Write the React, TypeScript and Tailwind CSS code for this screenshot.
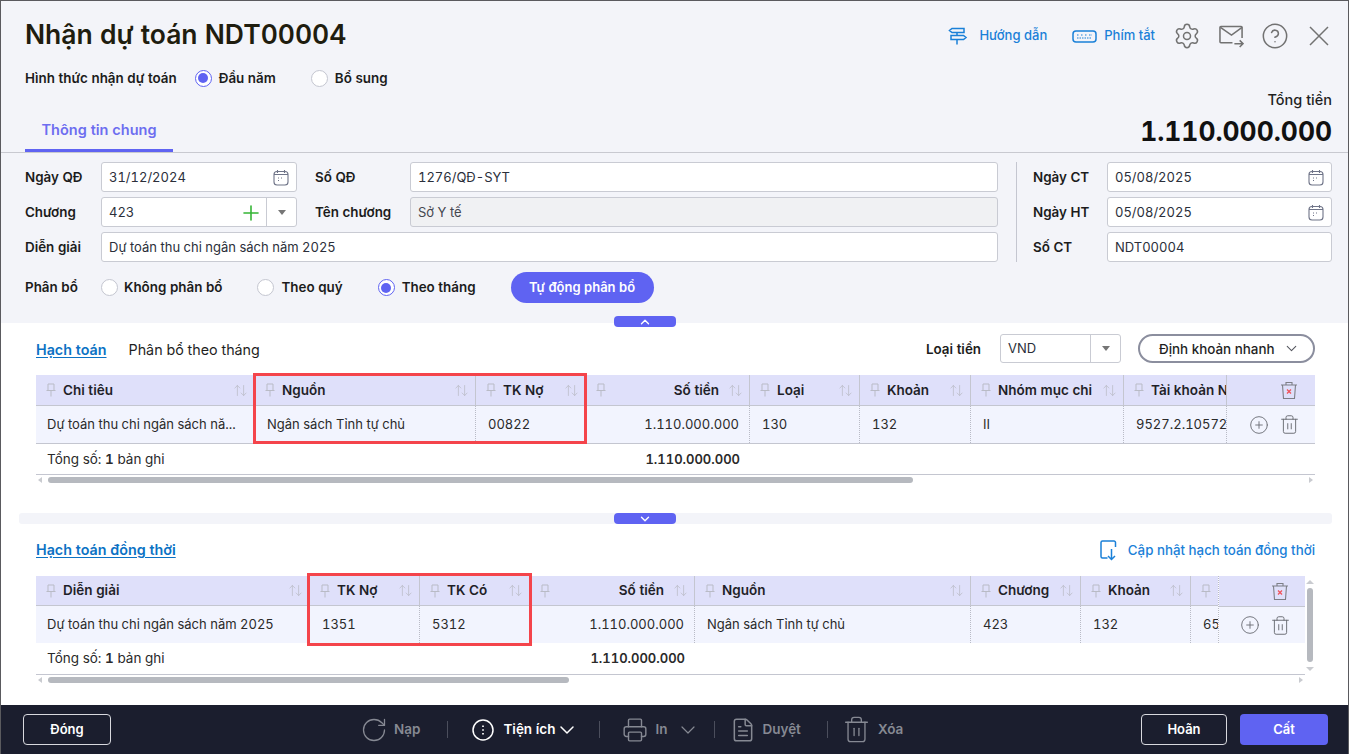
import React from 'react'
import { ArrowUpDown, ChevronDown, ChevronUp, CircleHelp, CirclePlus, FileText, Plus, Printer, RotateCw, Settings, Trash2 } from 'lucide-react'

const Radio = ({ checked = false }: { checked?: boolean }) => (
    <span className={`flex h-[17px] w-[17px] shrink-0 items-center justify-center rounded-full bg-white ${checked ? 'border-[1.5px] border-[#5f63f2]' : 'border border-[#c4c6d0]'}`}>
        {checked && <span className="h-[10px] w-[10px] rounded-full bg-[#5f63f2]" />}
    </span>
)

const CalendarIcon = () => (
    <svg width="16" height="17" viewBox="0 0 16 17" fill="none" stroke="#6f7488" strokeWidth="1.1" className="absolute right-[7px] top-[6px]">
        <rect x="1" y="2.5" width="14" height="13.5" rx="3" />
        <path d="M1 5.5h14M4.5 1v3M11.5 1v3" />
        <path d="M5 9h1M8 9h1M5 11.5h1" strokeWidth="1" />
    </svg>
)

const Caret = () => (
    <svg width="10" height="7" viewBox="0 0 10 7"><path d="M1 1h8L5 6z" fill="#767676" /></svg>
)

const Pin = () => (
    <svg width="10" height="14" viewBox="0 0 10 14" fill="none" stroke="#b9bbc6" strokeWidth="1" className="shrink-0">
        <path d="M2 1h6v6.5H2zM.5 7.500h9M5 7.500V13.500" />
    </svg>
)

const Sort = () => <ArrowUpDown size={15} strokeWidth={1.2} className="shrink-0 text-[#b9bbc6]" />

const TrashX = () => (
    <svg width="18" height="19" viewBox="0 0 18 19" fill="none" stroke="#7d7f86" strokeWidth="1.1">
        <path d="M1 4h16M6 4V1.500h6V4M2.500 4l1 13.500h11l1-13.500" />
        <path d="M7 8.500l4 4M11 8.500l-4 4" stroke="#f0525a" strokeWidth="1.300" />
    </svg>
)

const Field = ({ value, muted = false, calendar = false }: { value: string; muted?: boolean; calendar?: boolean }) => (
    <div className={`relative flex h-[30px] items-center rounded-[3px] border border-[#c9cbd3] px-[7px] pt-[1px] text-[13px] ${muted ? 'bg-[#f0f1f3] text-[#44474f]' : 'bg-white text-[#2b2f3a]'}`}>
        {value}
        {calendar && <CalendarIcon />}
    </div>
)

const Label = ({ children, className = '' }: { children: React.ReactNode; className?: string }) => (
    <div className={`flex items-center text-[13.4px] font-semibold text-[#1c1c1c] ${className}`}>{children}</div>
)

const HeadCell = ({ title, right = false, sort = true }: { title?: string; right?: boolean; sort?: boolean }) => (
    <div className="flex h-full min-w-0 items-center overflow-hidden border-r border-[#c4c6d0] pl-[10px] pr-[6px]">
        <Pin />
        {title && (
            <span className={`ml-[7px] whitespace-nowrap text-[13.5px] font-semibold text-[#1f1f28] ${right ? 'flex-1 pr-[9px] text-right' : ''}`}>{title}</span>
        )}
        {title && sort && <span className={right ? '' : 'ml-auto'}><Sort /></span>}
    </div>
)

const BodyCell = ({ value, right = false }: { value: string; right?: boolean }) => (
    <div className={`flex h-full min-w-0 items-center overflow-hidden whitespace-nowrap border-r border-dotted border-[#b9bbc6] pl-[12px] pr-[10px] text-[13px] first:pl-[11px] ${right ? 'justify-end' : ''}`}>
        {value}
    </div>
)

const ActionHead = () => (
    <div className="flex h-[31px] w-full items-center justify-center border-b border-[#c4c6d0] bg-[#dfe0fa] pl-[35px]">
        <TrashX />
    </div>
)

const ActionBody = ({ height }: { height: string }) => (
    <div className={`flex w-full items-center justify-center gap-[10px] bg-[#f2f4fe] pl-[7px] text-[#6a6c74] ${height}`}>
        <CirclePlus size={20} strokeWidth={1.1} />
        <Trash2 size={21} strokeWidth={1.1} />
    </div>
)

const HScroll = ({ thumb }: { thumb: string }) => (
    <div className="flex h-[10px] w-full items-center border-t border-[#c4c6d0]">
        <span className="ml-[2px] h-0 w-0 border-y-[3px] border-r-[4px] border-y-transparent border-r-[#c9cbd0]" />
        <span className={`ml-[6px] h-[6px] rounded-full bg-[#b6b9bf] ${thumb}`} />
        <span className="ml-auto mr-[2px] h-0 w-0 border-y-[3px] border-l-[4px] border-y-transparent border-l-[#c9cbd0]" />
    </div>
)

const CollapseTab = ({ up }: { up: boolean }) => (
    <button className="flex h-[11px] w-[62px] items-center justify-center rounded-[4px] bg-[#5f63f2] text-white">
        {up ? <ChevronUp size={14} strokeWidth={2.4} /> : <ChevronDown size={14} strokeWidth={2.4} />}
    </button>
)

const ToolSep = () => <span className="block h-[17px] w-px bg-[#4b4e5c]" />

export default function App() {
    return (
        <div className="h-[754px] w-[1351px] overflow-hidden bg-white font-['Inter',sans-serif] tabular-nums">
            <div className="flex h-full w-[1349px] flex-col border-x border-t border-[#5a5a5e]">

                {/* header */}
                <div className="border-b border-[#c8c9d0] bg-[#f3f4f9] pl-[24px] pr-[16px] pt-[16px]">
                    <div className="flex h-[36px] items-center justify-between">
                        <h1 className="text-[26.5px] font-semibold text-[#1f1d0f]">Nhận dự toán NDT00004</h1>
                        <div className="flex items-center pt-[2px] text-[13px] font-medium text-[#1a80d8]">
                            <svg width="20" height="20" viewBox="0 0 20 20" fill="none" stroke="#1a80d8" strokeWidth="1.500">
                                <path d="M4 2.500h12v4H4L1.500 4.500zM3 9.500h12.500L18 11.500l-2.500 2H3zM9 6.500v3M9 13.500v5" />
                            </svg>
                            <span className="ml-[11px]">Hướng dẫn</span>
                            <svg width="25" height="13" viewBox="0 0 25 13" fill="none" stroke="#1a80d8" strokeWidth="1.500" className="ml-[25px]">
                                <rect x="1" y="1" width="23" height="11" rx="3" />
                                <path d="M5 5h2M9 5h2M13 5h2M17 5h3M5 8h15" strokeWidth="1.200" strokeDasharray="1.500 1" />
                            </svg>
                            <span className="ml-[7px]">Phím tắt</span>
                            <Settings size={28} strokeWidth={1.3} className="ml-[18px] text-[#727272]" />
                            <svg width="25" height="23" viewBox="0 0 26 23" fill="none" stroke="#727272" strokeWidth="1.600" className="ml-[18px]">
                                <path d="M14 18H2a1 1 0 0 1-1-1V2a1 1 0 0 1 1-1h21a1 1 0 0 1 1 1v11" />
                                <path d="M1.500 2l11.500 8 11-8M16 19h9M21.500 15.500 25 19l-3.500 3.500" />
                            </svg>
                            <CircleHelp size={28} strokeWidth={1.3} className="ml-[17px] text-[#727272]" />
                            <svg width="20" height="20" viewBox="0 0 20 20" fill="none" stroke="#727272" strokeWidth="1.500" className="ml-[20px] mr-[3px]">
                                <path d="M1 1l18 18M19 1 1 19" />
                            </svg>
                        </div>
                    </div>

                    <div className="mt-[15px] flex h-[20px] items-center text-[13.4px] font-semibold text-[#1c1c1c]">
                        <span>Hình thức nhận dự toán</span>
                        <span className="ml-[18px]"><Radio checked /></span>
                        <span className="ml-[7px]">Đầu năm</span>
                        <span className="ml-[35px]"><Radio /></span>
                        <span className="ml-[7px]">Bổ sung</span>
                    </div>

                    <div className="mt-[3px] flex items-end justify-between">
                        <div className="flex h-[37px] w-[148px] items-center justify-center border-b-[3px] border-[#5f63f2] pb-[5px] text-[14.5px] font-semibold text-[#6d6df0]">Thông tin chung</div>
                        <div className="text-right">
                            <div className="text-[14.5px] font-medium leading-[18px] text-[#1f1f1f]">Tổng tiền</div>
                            <div className="mb-[5px] mt-[6px] text-[26.4px] font-bold leading-[32px] text-[#111]">1.110.000.000</div>
                        </div>
                    </div>
                </div>

                {/* form */}
                <div className="relative h-[170px] shrink-0 bg-[#f3f4f9] pl-[24px] pr-[16px] pt-[9px]">
                    <div className="flex">
                        <div className="grid flex-1 grid-cols-[76px_196px_113px_1fr] gap-y-[5px]">
                            <Label>Ngày QĐ</Label>
                            <Field value="31/12/2024" calendar />
                            <Label className="pl-[18px]">Số QĐ</Label>
                            <Field value="1276/QĐ-SYT" />
                            <Label className="pt-[1px]">Chương</Label>
                            <div className="flex h-[30px] rounded-[3px] border border-[#c9cbd3] bg-white text-[13px] text-[#2b2f3a]">
                                <div className="flex flex-1 items-center justify-between border-r border-[#c9cbd3] pl-[7px] pr-[3px] pt-[1px]">
                                    423
                                    <Plus size={24} strokeWidth={1.6} className="text-[#35b535]" />
                                </div>
                                <div className="flex w-[29px] items-center justify-center"><Caret /></div>
                            </div>
                            <Label className="pl-[18px] pt-[1px]">Tên chương</Label>
                            <Field value="Sở Y tế" muted />
                            <Label className="pt-[1px]">Diễn giải</Label>
                            <div className="col-span-3"><Field value="Dự toán thu chi ngân sách năm 2025" /></div>
                        </div>
                        <div className="ml-[18px] grid w-[316px] grid-cols-[90px_1fr] gap-y-[5px] border-l border-[#c4c6d0]">
                            <Label className="pl-[16px]">Ngày CT</Label>
                            <Field value="05/08/2025" calendar />
                            <Label className="pl-[16px] pt-[1px]">Ngày HT</Label>
                            <Field value="05/08/2025" calendar />
                            <Label className="pl-[16px] pt-[1px]">Số CT</Label>
                            <Field value="NDT00004" />
                        </div>
                    </div>
                    <div className="mt-[10px] flex h-[31px] items-center text-[13.4px] font-semibold text-[#1c1c1c]">
                        <span className="w-[76px]">Phân bổ</span>
                        <Radio />
                        <span className="ml-[6px]">Không phân bổ</span>
                        <span className="ml-[35px]"><Radio /></span>
                        <span className="ml-[7px]">Theo quý</span>
                        <span className="ml-[35px]"><Radio checked /></span>
                        <span className="ml-[7px]">Theo tháng</span>
                        <button className="ml-[35px] h-[31px] w-[143px] rounded-full bg-[#5f63f2] text-[13px] font-semibold text-white">Tự động phân bổ</button>
                    </div>
                    <div className="absolute left-[613px] top-[163px]"><CollapseTab up /></div>
                </div>

                {/* body */}
                <div className="min-h-0 flex-1 bg-white">
                    <div className="pl-[35px] pr-[33px] pt-[11px]">
                        <div className="flex h-[29px] items-center">
                            <span className="pt-[2px] text-[14.3px] font-semibold text-[#0b72c4] underline underline-offset-2">Hạch toán</span>
                            <span className="ml-[22px] pt-[2px] text-[14.3px] text-[#1f1f1f]">Phân bổ theo tháng</span>
                            <span className="ml-auto pt-[2px] text-[13.4px] font-semibold text-[#1c1c1c]">Loại tiền</span>
                            <div className="ml-[19px] flex h-[29px] w-[121px] rounded-[3px] border border-[#c9cbd3] text-[13px] text-[#2b2f3a]">
                                <div className="flex flex-1 items-center border-r border-[#c9cbd3] pl-[7px] pt-[1px]">VND</div>
                                <div className="flex w-[29px] items-center justify-center"><Caret /></div>
                            </div>
                            <button className="ml-[17px] flex h-[29px] w-[177px] items-center justify-between rounded-full border-2 border-[#8b8e9e] pl-[19px] pr-[13px] text-[13.4px] font-medium text-[#1f1f1f]">
                                <span className="pt-[1px]">Định khoản nhanh</span>
                                <ChevronDown size={17} strokeWidth={1.5} className="text-[#55575f]" />
                            </button>
                        </div>

                        <div className="relative mt-[12px]">
                            <div className="flex">
                                <div className="min-w-0 flex-1 overflow-hidden">
                                    <div className="grid h-[31px] grid-cols-[219px_221px_110px_164px_110px_111px_153px_103px] border-b border-[#c4c6d0] bg-[#dfe0fa]">
                                        <HeadCell title="Chi tiêu" />
                                        <HeadCell title="Nguồn" />
                                        <HeadCell title="TK Nợ" />
                                        <HeadCell title="Số tiền" right />
                                        <HeadCell title="Loại" />
                                        <HeadCell title="Khoản" />
                                        <HeadCell title="Nhóm mục chi" />
                                        <HeadCell title="Tài khoản N" sort={false} />
                                    </div>
                                    <div className="grid h-[38px] grid-cols-[219px_221px_110px_164px_110px_111px_153px_103px] border-b border-[#c4c6d0] bg-[#f2f4fe] text-[#2a2a2a]">
                                        <BodyCell value="Dự toán thu chi ngân sách nă..." />
                                        <BodyCell value="Ngân sách Tỉnh tự chủ" />
                                        <BodyCell value="00822" />
                                        <BodyCell value="1.110.000.000" right />
                                        <BodyCell value="130" />
                                        <BodyCell value="132" />
                                        <BodyCell value="II" />
                                        <BodyCell value="9527.2.10572" />
                                    </div>
                                </div>
                                <div className="w-[88px] shrink-0">
                                    <ActionHead />
                                    <div className="border-b border-[#c4c6d0]"><ActionBody height="h-[37px]" /></div>
                                </div>
                            </div>
                            <div className="grid h-[30px] grid-cols-[550px_164px] items-center pt-[1px] text-[13.5px] text-[#2a2a2a]">
                                <span className="pl-[11px]">Tổng số: <b className="font-semibold">1</b> bản ghi</span>
                                <span className="pr-[10px] text-right text-[13px] font-semibold">1.110.000.000</span>
                            </div>
                            <HScroll thumb="w-[865px]" />
                            <div className="pointer-events-none absolute left-[217px] top-[-2px] h-[71px] w-[334px] border-[3px] border-[#f4444b]" />
                        </div>
                    </div>

                    <div className="relative ml-[18px] mt-[29px] h-[11px] w-[1313px] rounded-[3px] bg-[#f3f4f9]">
                        <div className="absolute left-[595px] top-0"><CollapseTab up={false} /></div>
                    </div>

                    <div className="pl-[35px] pr-[33px] pt-[12px]">
                        <div className="flex h-[29px] items-center">
                            <span className="pb-[2px] text-[14.3px] font-semibold text-[#0b72c4] underline underline-offset-2">Hạch toán đồng thời</span>
                            <svg width="18" height="21" viewBox="0 0 18 21" fill="none" stroke="#1a80d8" strokeWidth="1.500" className="ml-auto">
                                <path d="M15.500 7V2.500a1.500 1.500 0 0 0-1.500-1.500H2.500A1.500 1.500 0 0 0 1 2.500v14A1.500 1.500 0 0 0 2.500 18h5M11.500 9v10.500M8 16l3.500 3.500L15 16" />
                            </svg>
                            <span className="ml-[10px] text-[13.3px] font-medium text-[#1a80d8]">Cập nhật hạch toán đồng thời</span>
                        </div>

                        <div className="relative mt-[11px] flex">
                            <div className="min-w-0 flex-1">
                                <div className="flex">
                                    <div className="min-w-0 flex-1 overflow-hidden">
                                        <div className="grid h-[30px] grid-cols-[274px_110px_110px_165px_276px_110px_110px_110px] border-b border-[#c4c6d0] bg-[#dfe0fa]">
                                            <HeadCell title="Diễn giải" />
                                            <HeadCell title="TK Nợ" />
                                            <HeadCell title="TK Có" />
                                            <HeadCell title="Số tiền" right />
                                            <HeadCell title="Nguồn" />
                                            <HeadCell title="Chương" />
                                            <HeadCell title="Khoản" />
                                            <HeadCell />
                                        </div>
                                        <div className="grid h-[37px] grid-cols-[274px_110px_110px_165px_276px_110px_110px_110px] bg-[#f2f4fe] text-[#2a2a2a]">
                                            <BodyCell value="Dự toán thu chi ngân sách năm 2025" />
                                            <BodyCell value="1351" />
                                            <BodyCell value="5312" />
                                            <BodyCell value="1.110.000.000" right />
                                            <BodyCell value="Ngân sách Tỉnh tự chủ" />
                                            <BodyCell value="423" />
                                            <BodyCell value="132" />
                                            <BodyCell value="65" />
                                        </div>
                                    </div>
                                    <div className="w-[87px] shrink-0 border-l border-dotted border-[#b9bbc6]">
                                        <ActionHead />
                                        <ActionBody height="h-[36px]" />
                                    </div>
                                </div>
                                <div className="grid h-[31px] grid-cols-[494px_165px] items-center text-[13.5px] text-[#2a2a2a]">
                                    <span className="pl-[11px]">Tổng số: <b className="font-semibold">1</b> bản ghi</span>
                                    <span className="pr-[10px] text-right text-[13px] font-semibold">1.110.000.000</span>
                                </div>
                                <HScroll thumb="w-[521px]" />
                            </div>
                            <div className="flex h-[98px] w-[10px] shrink-0 flex-col items-center pt-[4px]">
                                <span className="h-0 w-0 border-x-[4px] border-b-[4px] border-x-transparent border-b-[#c9cbd0]" />
                                <span className="mt-[4px] h-[74px] w-[6px] rounded-full bg-[#b6b9bf]" />
                                <span className="mt-[5px] h-0 w-0 border-x-[4px] border-t-[4px] border-x-transparent border-t-[#c9cbd0]" />
                            </div>
                            <div className="pointer-events-none absolute left-[271px] top-[-3px] h-[73px] w-[225px] border-[3px] border-[#f4444b]" />
                        </div>
                    </div>
                </div>

                {/* footer */}
                <div className="flex h-[49px] shrink-0 items-center bg-[#1b1e2e] pl-[22px] pr-[20px] text-[13px] font-semibold">
                    <button className="h-[31px] w-[88px] rounded-[4px] border border-[#d8d9de] text-white">Đóng</button>
                    <div className="ml-[249px] flex items-center text-[13.5px] text-[#868993]">
                        <RotateCw size={28} strokeWidth={1.1} />
                        <span className="ml-[6px]">Nạp</span>
                        <span className="ml-[27px]"><ToolSep /></span>
                        <svg width="22" height="22" viewBox="0 0 22 22" fill="none" stroke="#fff" strokeWidth="1.500" className="ml-[24px]">
                            <circle cx="11" cy="11" r="10" />
                            <path d="M11 6.500v1.500M11 10.300v1.500M11 14v1.500" strokeWidth="1.700" />
                        </svg>
                        <span className="ml-[9px] text-white">Tiện ích</span>
                        <ChevronDown size={24} strokeWidth={1.5} className="ml-0 text-white" />
                        <span className="ml-[20px]"><ToolSep /></span>
                        <Printer size={26} strokeWidth={1.3} className="ml-[22px]" />
                        <span className="ml-[7px]">In</span>
                        <ChevronDown size={24} strokeWidth={1.2} className="ml-[9px]" />
                        <span className="ml-[14px]"><ToolSep /></span>
                        <FileText size={26} strokeWidth={1.4} className="ml-[15px]" />
                        <span className="ml-[6px]">Duyệt</span>
                        <span className="ml-[26px]"><ToolSep /></span>
                        <Trash2 size={29} strokeWidth={1.1} className="ml-[14px]" />
                        <span className="ml-[7px]">Xóa</span>
                    </div>
                    <div className="ml-auto flex items-center">
                        <button className="h-[31px] w-[86px] rounded-[4px] border border-[#d8d9de] text-white">Hoãn</button>
                        <button className="ml-[13px] h-[31px] w-[88px] rounded-[4px] bg-[#5f63f2] text-white">Cất</button>
                    </div>
                </div>
            </div>
        </div>
    )
}
